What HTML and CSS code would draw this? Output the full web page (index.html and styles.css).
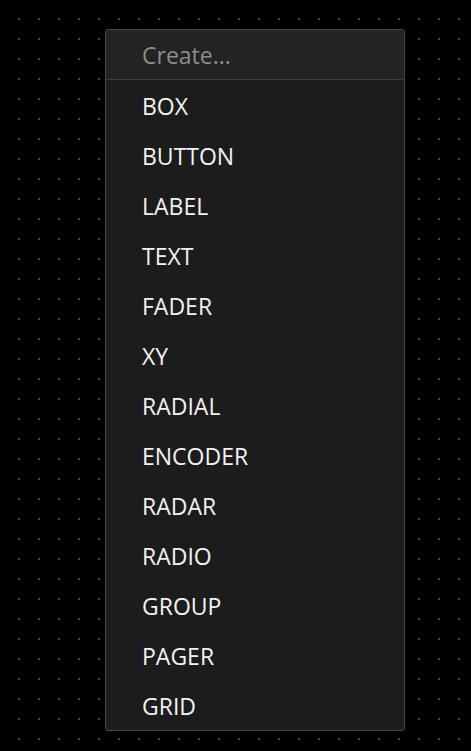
FILE: index.html
```html
<!DOCTYPE html>
<html lang="en">
<head>
	<meta charset="utf-8">
	<title>Create menu</title>
	<link rel="stylesheet" href="styles.css">
</head>
<body>
<div class="canvas">
	<ul class="menu">
		<li class="menu-title">Create...</li>
		<li>BOX</li>
		<li>BUTTON</li>
		<li>LABEL</li>
		<li>TEXT</li>
		<li>FADER</li>
		<li>XY</li>
		<li>RADIAL</li>
		<li>ENCODER</li>
		<li>RADAR</li>
		<li>RADIO</li>
		<li>GROUP</li>
		<li>PAGER</li>
		<li>GRID</li>
	</ul>
</div>
</body>
</html>
```

FILE: styles.css
```css
html, body {
	margin: 0;
	height: 100%;
}

body {
	background-color: #000;
	background-image: radial-gradient(circle, #4c4c4c 0.9px, transparent 1.1px);
	background-size: 20px 20px;
	background-position: 9px 9px;
	font-family: "Open Sans", "Noto Sans", sans-serif;
}

.canvas {
	padding: 29px 0 0 105px;
}

.menu {
	list-style: none;
	margin: 0;
	padding: 0;
	width: 298px;
	background: #1c1c1c;
	border: 1px solid #4a4a4a;
	border-radius: 3px;
}

.menu li {
	height: 50px;
	line-height: 52px;
	padding-left: 36px;
	font-size: 23px;
	color: #f2f2f2;
}

.menu .menu-title {
	height: 49px;
	line-height: 51px;
	color: #8c8c8c;
	background: #232323;
	border-bottom: 1px solid #3c3c3c;
	border-radius: 3px 3px 0 0;
}
```
